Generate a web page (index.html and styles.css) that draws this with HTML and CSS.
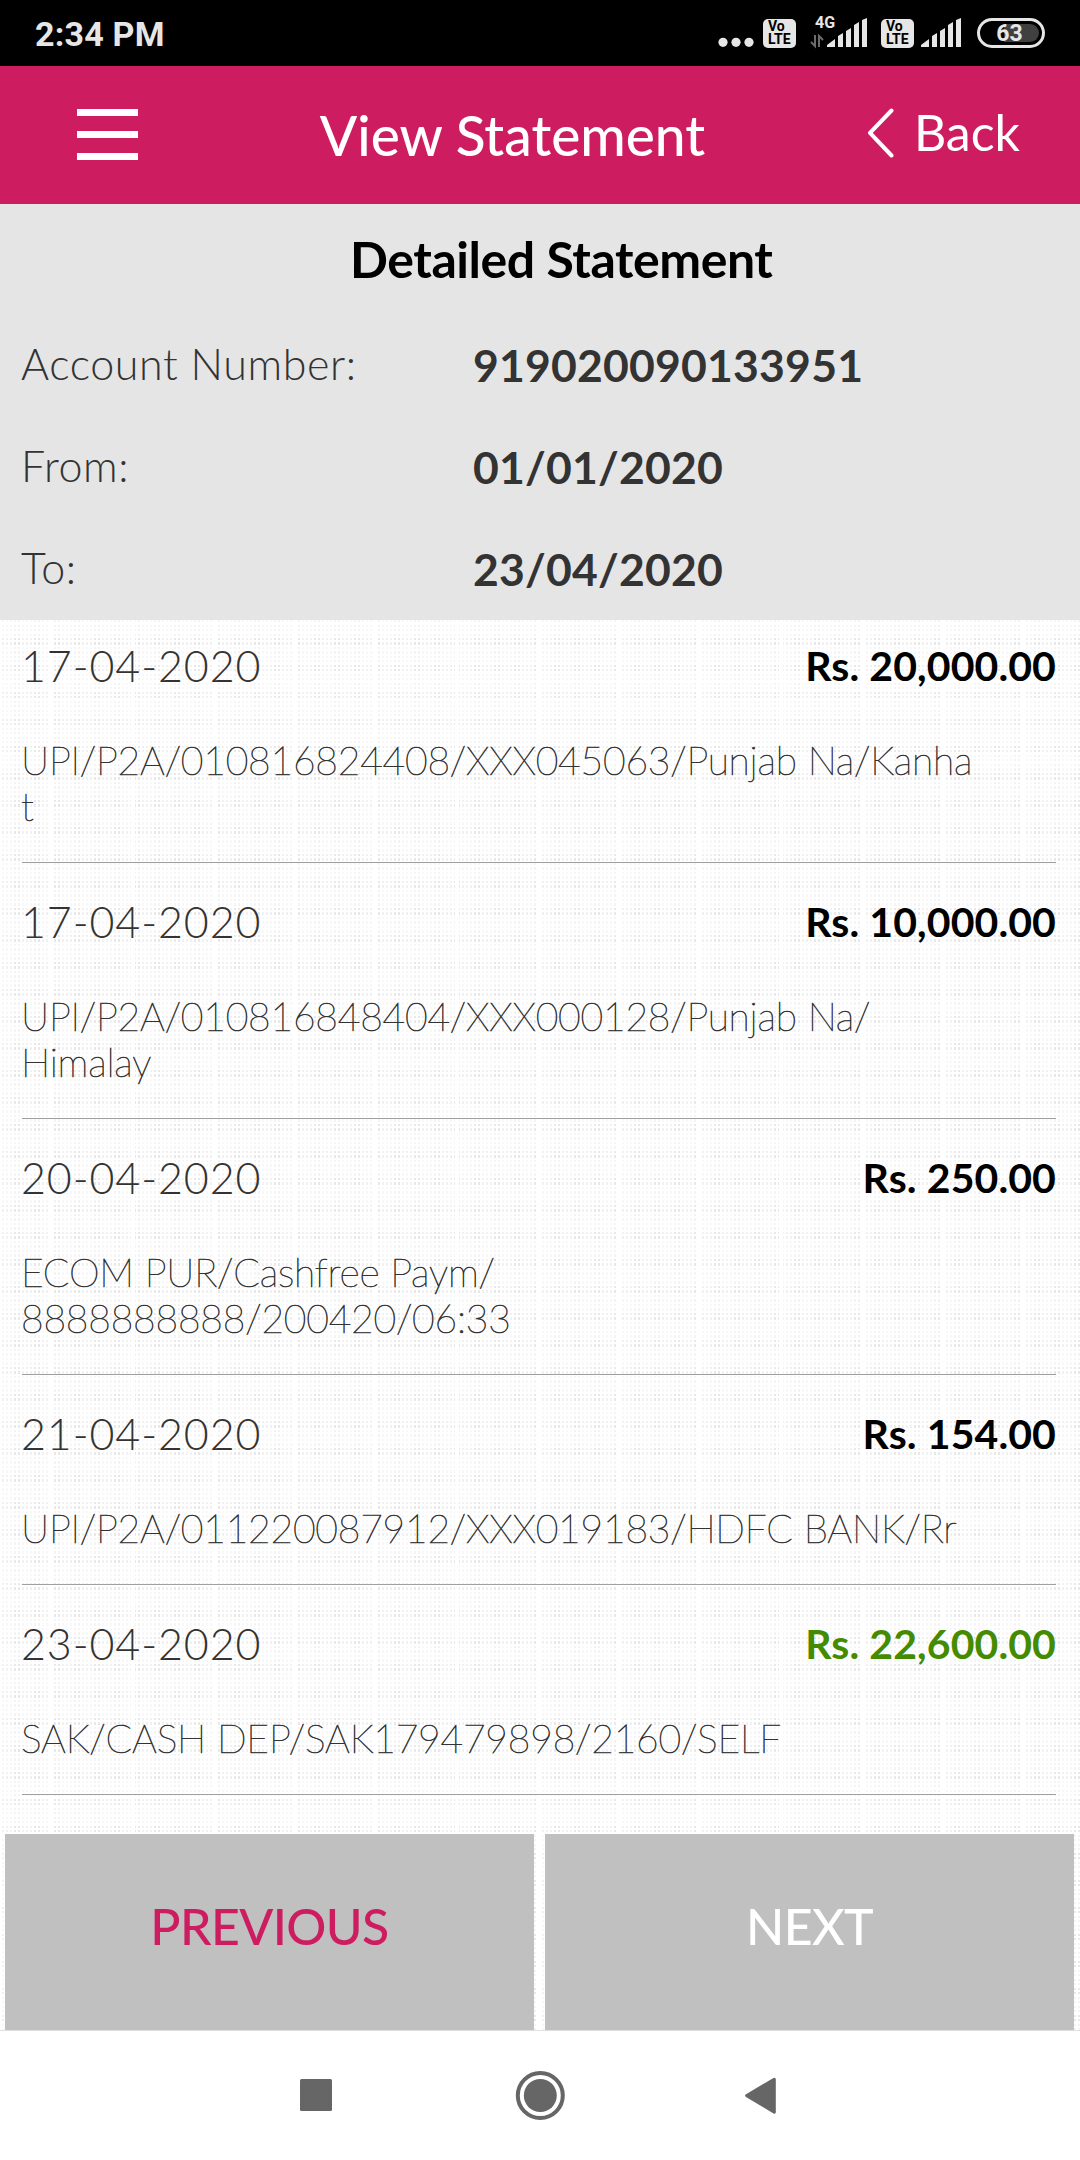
FILE: index.html
```html
<!DOCTYPE html>
<html lang="en">
<head>
    <meta charset="UTF-8">
    <meta name="viewport" content="width=device-width, initial-scale=1.0">
    <title>View Statement</title>
    <link rel="stylesheet" href="styles.css">
</head>
<body>
    <div class="status-bar">
        <span class="time">2:34 PM</span>
        <div class="status-icons">
            <svg class="more-dots" width="36" height="66" viewBox="0 0 36 66" fill="#e6e6e6">
                <circle cx="5" cy="42.3" r="4.6"/>
                <circle cx="18" cy="42.3" r="4.6"/>
                <circle cx="31" cy="42.3" r="4.6"/>
            </svg>
            <span class="volte"><span>Vo</span><span>LTE</span></span>
            <div class="network">
                <span class="network-type">4G</span>
                <svg width="58" height="66" viewBox="0 0 58 66">
                    <path d="M5 35v11l-4-4M9 47V36l4 4" fill="none" stroke="#6b6b6b" stroke-width="2"/>
                    <path d="M17 47v-2l8-6v8zM28 47V36l5-3v14zM36 47V31l5-3v19zM44 47V25l5-3v25zM52 47V20l5-2v29z" fill="#e6e6e6"/>
                </svg>
            </div>
            <span class="volte volte-second"><span>Vo</span><span>LTE</span></span>
            <svg class="signal" width="41" height="66" viewBox="0 0 41 66">
                <path d="M0 47v-2l8-6v8zM11 47V36l5-3v14zM19 47V31l5-3v19zM27 47V25l5-3v25zM35 47V20l5-2v29z" fill="#e6e6e6"/>
            </svg>
            <span class="battery"><span class="battery-level">63</span></span>
        </div>
    </div>

    <header class="header">
        <button class="menu-button" aria-label="Menu">
            <span></span>
            <span></span>
            <span></span>
        </button>
        <h1>View Statement</h1>
        <a class="back" href="#">
            <svg width="28" height="50" viewBox="0 0 28 50">
                <path d="M24.5 2.5L3 24.8l21.5 22.7" fill="none" stroke="#fff" stroke-width="4" stroke-linecap="round" stroke-linejoin="round"/>
            </svg>
            <span>Back</span>
        </a>
    </header>

    <section class="summary">
        <h2>Detailed Statement</h2>
        <dl>
            <dt>Account Number:</dt>
            <dd>919020090133951</dd>
            <dt>From:</dt>
            <dd>01/01/2020</dd>
            <dt>To:</dt>
            <dd>23/04/2020</dd>
        </dl>
    </section>

    <main class="content">
        <ul class="transactions">
            <li>
                <div class="row">
                    <span class="date">17-04-2020</span>
                    <span class="amount">Rs. 20,000.00</span>
                </div>
                <p>UPI/P2A/010816824408/XXX045063/Punjab Na/Kanha<br>t</p>
            </li>
            <li>
                <div class="row">
                    <span class="date">17-04-2020</span>
                    <span class="amount">Rs. 10,000.00</span>
                </div>
                <p>UPI/P2A/010816848404/XXX000128/Punjab Na/<br>Himalay</p>
            </li>
            <li>
                <div class="row">
                    <span class="date">20-04-2020</span>
                    <span class="amount">Rs. 250.00</span>
                </div>
                <p>ECOM PUR/Cashfree Paym/<br>8888888888/200420/06:33</p>
            </li>
            <li>
                <div class="row">
                    <span class="date">21-04-2020</span>
                    <span class="amount">Rs. 154.00</span>
                </div>
                <p>UPI/P2A/011220087912/XXX019183/HDFC BANK/Rr</p>
            </li>
            <li>
                <div class="row">
                    <span class="date">23-04-2020</span>
                    <span class="amount credit">Rs. 22,600.00</span>
                </div>
                <p>SAK/CASH DEP/SAK179479898/2160/SELF</p>
            </li>
        </ul>
        <div class="pager">
            <button class="previous">PREVIOUS</button>
            <button class="next">NEXT</button>
        </div>
    </main>

    <nav class="system-nav">
        <svg width="1080" height="129" viewBox="0 0 1080 129" fill="#666">
            <rect x="300" y="48" width="32" height="32" rx="1.5"/>
            <circle cx="540.3" cy="64.5" r="22.5" fill="none" stroke="#666" stroke-width="4"/>
            <circle cx="540.3" cy="64.5" r="16.5"/>
            <path d="M746 63.2L773.5 47q2.3-1 2.3 1.5V81q0 2.5-2.3 1.5L746 66q-2-1.4 0-2.8z"/>
        </svg>
    </nav>
</body>
</html>
```

FILE: styles.css
```css
* {
    box-sizing: border-box;
}

body {
    margin: 0;
    width: 1080px;
    height: 2160px;
    display: flex;
    flex-direction: column;
    overflow: hidden;
    background-color: #fff;
    font-family: Lato, sans-serif;
    color: #333;
}

button {
    border: none;
    padding: 0;
    font-family: inherit;
    cursor: pointer;
}

/* Status bar */
.status-bar {
    height: 66px;
    padding: 0 35px;
    display: flex;
    justify-content: space-between;
    background-color: #000;
    color: #e6e6e6;
    font-family: Roboto, sans-serif;
}

.time {
    font-size: 34px;
    font-weight: 700;
    line-height: 68px;
    letter-spacing: 0.2px;
}

.status-icons {
    display: flex;
    align-items: center;
}

.volte {
    width: 33px;
    height: 29px;
    margin-left: 9px;
    border-radius: 5px;
    background-color: #e6e6e6;
    color: #000;
    display: flex;
    flex-direction: column;
    justify-content: center;
    padding-left: 5px;
    font-size: 14px;
    font-weight: 700;
    line-height: 13px;
}

.network {
    position: relative;
    margin-left: 14px;
    height: 66px;
}

.network-type {
    position: absolute;
    left: 5px;
    top: 14px;
    font-size: 16px;
    line-height: 17px;
    font-weight: 700;
}

.volte-second {
    margin-left: 13px;
}

.signal {
    margin-left: 7px;
}

.battery {
    width: 68px;
    height: 30px;
    margin-left: 15px;
    padding: 3px;
    border: 3px solid #e6e6e6;
    border-radius: 15px;
}

.battery-level {
    display: block;
    height: 18px;
    padding-right: 3px;
    border-radius: 9px;
    background: linear-gradient(to right, #000 37%, #404040 37%);
    font-size: 23px;
    font-weight: 700;
    line-height: 19px;
    text-align: center;
}

/* Header */
.header {
    height: 138px;
    display: flex;
    justify-content: space-between;
    background-color: #cd1d60;
    color: #fff;
    padding: 0 60px 0 77px;
}

.menu-button {
    width: 61px;
    height: 51px;
    margin-top: 43px;
    display: flex;
    flex-direction: column;
    justify-content: space-between;
    background: none;
}

.menu-button span {
    height: 7px;
    width: 100%;
    background-color: #fff;
}

.header h1 {
    margin: 0 0 0 20px;
    font-size: 55px;
    font-weight: 500;
    line-height: 139px;
}

.back {
    display: flex;
    color: #fff;
    text-decoration: none;
    font-size: 50px;
    line-height: 133px;
}

.back svg {
    margin-top: 42px;
    margin-right: 19px;
}

/* Account summary */
.summary {
    height: 416px;
    padding-left: 21px;
    background-color: #e5e5e5;
}

.summary h2 {
    margin: 0 0 0 329px;
    height: 112px;
    font-size: 50px;
    line-height: 111px;
    font-weight: 700;
    letter-spacing: -0.45px;
    color: #000;
}

.summary dl {
    margin: 0;
    display: grid;
    grid-template-columns: 452px 1fr;
    grid-auto-rows: 102px;
}

.summary dt {
    font-size: 43px;
    font-weight: 300;
    line-height: 95px;
    letter-spacing: 0.6px;
}

.summary dd {
    margin: 0;
    font-size: 44.5px;
    font-weight: 700;
    line-height: 98px;
    letter-spacing: 0.2px;
}

/* Transactions */
.content {
    flex: 1;
    display: flex;
    flex-direction: column;
    justify-content: space-between;
    background-color: #fff;
    background-image:
        repeating-linear-gradient(to right, transparent 0 50px, #fff 50px 54px, transparent 54px 81px),
        repeating-linear-gradient(to bottom, rgba(255, 255, 255, 0.5) 0 18px, transparent 18px 27px),
        repeating-linear-gradient(to right, rgba(255, 255, 255, 0.4) 0 13px, transparent 13px 20px),
        repeating-linear-gradient(to right, #fff 0 2px, transparent 2px 4px),
        repeating-linear-gradient(to bottom, transparent 0 2px, #fff 2px 4.5px),
        linear-gradient(#e8e8e8, #e8e8e8);
}

.transactions {
    list-style: none;
    margin: 0;
    padding: 0 24px 0 22px;
}

.transactions li {
    padding: 13px 0 32px;
    border-bottom: 1px solid #a0a0a0;
}

.transactions li:first-child {
    padding-top: 0;
}

.row {
    display: flex;
    justify-content: space-between;
    height: 94px;
    line-height: 92px;
}

.date {
    margin-left: -1px;
    font-size: 43px;
    font-weight: 300;
    letter-spacing: 0.9px;
}

.amount {
    font-size: 41px;
    font-weight: 700;
    letter-spacing: 0.1px;
    color: #000;
}

.amount.credit {
    color: #458b00;
}

/* Hairline weight, thickened a little so it stays readable */
.transactions p {
    margin: 0 0 1px -1px;
    padding-top: 23px;
    font-size: 39px;
    font-weight: 100;
    line-height: 46px;
    letter-spacing: -0.2px;
    -webkit-text-stroke: 0.7px #333;
}

/* Pager buttons */
.pager {
    display: flex;
    gap: 11px;
    padding: 0 6px 0 5px;
}

.pager button {
    flex: 1;
    height: 196px;
    background-color: #c0c0c0;
    font-size: 50px;
    font-weight: 500;
    letter-spacing: -0.6px;
    padding-bottom: 13px;
}

.pager .previous {
    color: #cd1d60;
}

.pager .next {
    color: #fff;
}

/* Android navigation */
.system-nav {
    height: 130px;
    border-top: 1px solid #e0e0e0;
    background-color: #fff;
}
```
